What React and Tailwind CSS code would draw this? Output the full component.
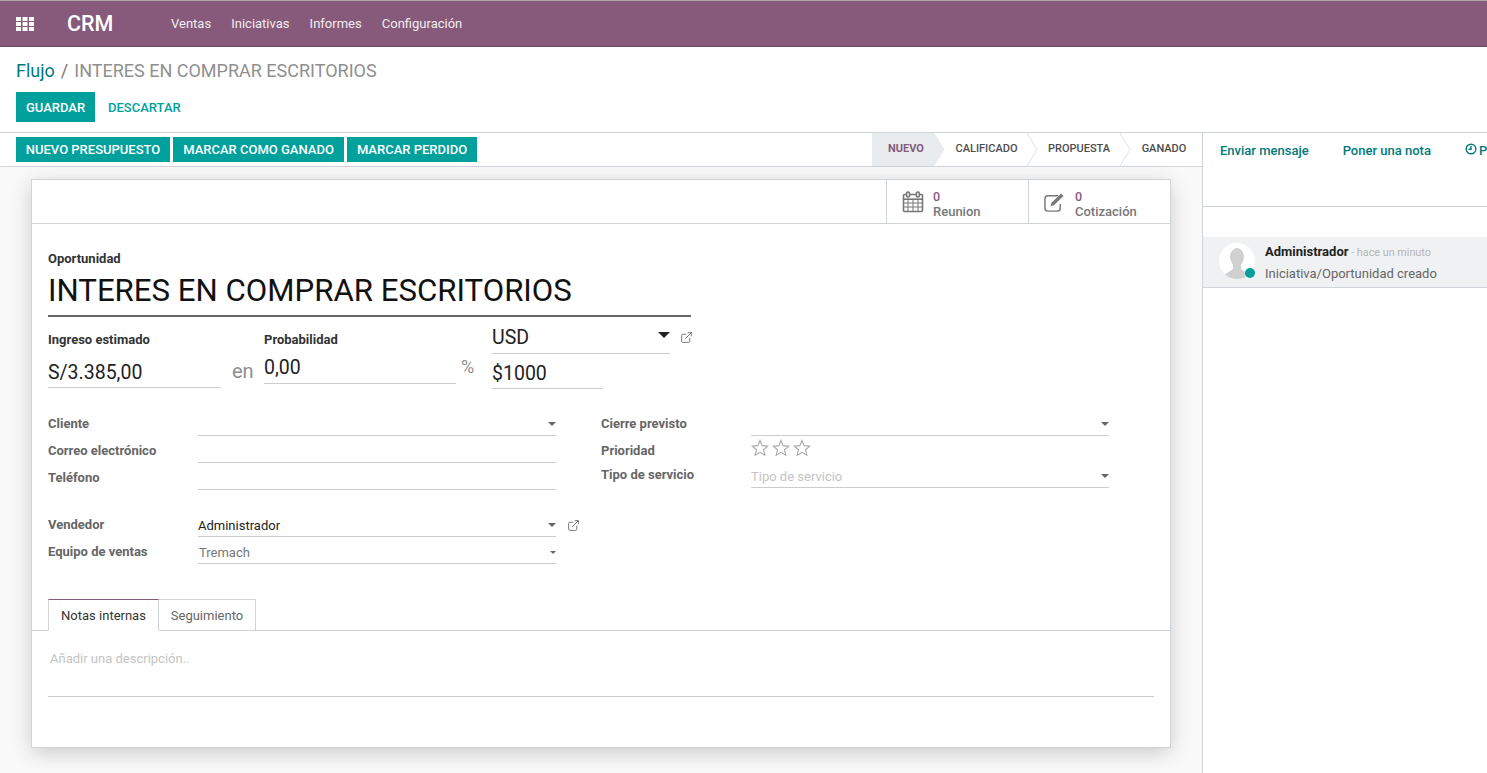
import React from "react";
import { ExternalLink } from "lucide-react";

const Caret = ({ big, small }) => (
  <span className={`inline-block w-0 h-0 border-l-transparent border-r-transparent ${big ? "border-l-[6px] border-r-[6px] border-t-[6px] border-t-[#222]" : small ? "border-l-[3.5px] border-r-[3.5px] border-t-[3.5px] border-t-[#666]" : "border-l-[4.5px] border-r-[4.5px] border-t-[4px] border-t-[#666]"}`} />
);

const Ext = ({ className = "" }) => <ExternalLink size={13} strokeWidth={1.8} className={`text-[#777] ${className}`} />;

const Star = () => (
  <svg width="18" height="17" viewBox="0 0 24 23" fill="none" stroke="#a8a8a8" strokeWidth="1.5" strokeLinejoin="miter">
    <path d="M12 2l3 7 7.5.7-5.7 4.9 1.7 7.3L12 18l-6.5 3.9 1.7-7.3L1.5 9.7 9 9z" />
  </svg>
);

const Field = ({ label, value, caret, muted, placeholder, ext, w = "w-[358px]", small }) => (
  <div className="flex h-[27px] items-center">
    <div className="w-[150px] shrink-0 font-bold text-[#666] leading-none mt-[1px]">{label}</div>
    <div className={`${w} h-[27px] border-b border-[#ccc] flex items-center justify-between relative`}>
      <span className={`pt-[5px] ${placeholder ? "text-[#c4c4c4]" : muted ? "text-[#777] pl-[1px]" : "text-[#222]"}`}>{value || placeholder || ""}</span>
      {caret && <span className="flex items-center pt-[4px]"><Caret small={small} /></span>}
      {ext && <span className="absolute left-[369px] top-[9px]"><Ext /></span>}
    </div>
  </div>
);

const Stat = ({ icon, label }) => (
  <div className="w-[142px] border-l border-[#ced4da] flex items-center pl-[15px] gap-[9px]">
    <div className="w-[22px] flex justify-center mt-[1px]">{icon}</div>
    <div className="leading-[15px] font-medium mt-[4px]">
      <div className="text-[#875A7B] font-medium text-[12.5px]">0</div>
      <div className="text-[#777]">{label}</div>
    </div>
  </div>
);

const Step = ({ children, active, w }) => (
  <div className={`relative h-full flex items-center justify-center ${w} ${active ? "bg-[#e9ecef] text-[#875A7B] font-bold" : "text-[#4c4c4c] font-medium"} text-[11px] uppercase`}>
    {children}
    <svg className="absolute top-0 -right-[11px] z-10" width="11" height="33" viewBox="0 0 11 33" fill={active ? "#e9ecef" : "none"}>
      <path d="M0 0 L10 16.5 L0 33" stroke={active ? "#e9ecef" : "#dde0e4"} />
    </svg>
  </div>
);

const TealBtn = ({ children, w }) => (
  <button className={`h-[25px] ${w} bg-[#00A09D] text-white font-medium text-[13px]`}>{children}</button>
);

export default function App() {
  return (
    <div className="w-[1487px] h-[773px] overflow-hidden flex flex-col bg-white text-[13px] text-[#222] font-['Roboto',sans-serif]">
      <nav className="h-[47px] shrink-0 bg-[#875A7B] border-t border-[#aaa] border-b border-b-[#6d4a64] flex items-center text-white">
        <svg className="ml-[16px]" width="18" height="14" viewBox="0 0 18 14" fill="white">
          {[0, 5, 10].map((y) => [0, 6.5, 13].map((x) => <rect key={`${x}-${y}`} x={x} y={y} width="5" height="4" />))}
        </svg>
        <span className="ml-[33px] text-[21.5px] font-medium w-[104px] pt-[1px]">CRM</span>
        <div className="flex gap-[20.1px] text-[#f1ecf0]">
          <span>Ventas</span><span>Iniciativas</span><span>Informes</span><span>Configuración</span>
        </div>
      </nav>

      <header className="h-[86px] shrink-0 border-b border-[#ced4da] pl-[16px] pt-[12px]">
        <div className="text-[18px] leading-[24px] flex">
          <span className="text-[#00797a]">Flujo</span>
          <span className="text-[#777] mx-[6px]">/</span>
          <span className="text-[#8f8f8f]">INTERES EN COMPRAR ESCRITORIOS</span>
        </div>
        <div className="flex items-center mt-[9px]">
          <button className="h-[30px] w-[79px] bg-[#00A09D] text-white font-medium pt-[1px]">GUARDAR</button>
          <span className="ml-[13px] text-[#00A09D] font-medium pt-[1px]">DESCARTAR</span>
        </div>
      </header>

      <div className="flex-1 flex min-h-0">
        <div className="w-[1202px] shrink-0 flex flex-col">
          <div className="h-[34px] shrink-0 border-b border-[#ced4da] flex items-center justify-between pl-[16px]">
            <div className="flex gap-[3px]">
              <TealBtn w="w-[154px]">NUEVO PRESUPUESTO</TealBtn>
              <TealBtn w="w-[171px]">MARCAR COMO GANADO</TealBtn>
              <TealBtn w="w-[130px]">MARCAR PERDIDO</TealBtn>
            </div>
            <div className="flex h-[33px] items-stretch">
              <Step active w="w-[62px] pl-[6px]">Nuevo</Step>
              <Step w="w-[93px] pl-[12px]">Calificado</Step>
              <Step w="w-[93px] pl-[11px]">Propuesta</Step>
              <div className="w-[82px] pl-[6px] flex items-center justify-center text-[11px] font-medium text-[#4c4c4c] uppercase">Ganado</div>
            </div>
          </div>

          <div className="flex-1 bg-[#f9f9f9] pl-[31px] pt-[12px] min-h-0">
            <div className="w-[1140px] h-[569px] bg-white border border-[#ced4da] shadow-[0_5px_20px_-1px_rgba(0,0,0,0.2)]">
              <div className="h-[44px] border-b border-[#ced4da] flex justify-end">
                <Stat label="Reunion" icon={
                  <svg width="22" height="22" viewBox="0 0 22 22" fill="none" stroke="#777" strokeWidth="1.6">
                    <rect x="1.5" y="3.5" width="19" height="17" rx="1" />
                    <path d="M1.5 8.2h19" strokeWidth="1.6" />
                    <path d="M1.5 12h19M1.5 16h19M6 8v12.5M11 8v12.5M16 8v12.5" strokeWidth="1" />
                    <rect x="4.6" y="1" width="3" height="5" rx="1.4" fill="#fff" />
                    <rect x="14.4" y="1" width="3" height="5" rx="1.4" fill="#fff" />
                  </svg>
                } />
                <Stat label="Cotización" icon={
                  <svg width="23" height="21" viewBox="0 0 23 21" fill="none" stroke="#777" strokeWidth="1.5">
                    <path d="M15 3.5H4A3 3 0 0 0 1 6.5v10a3 3 0 0 0 3 3h10a3 3 0 0 0 3-3V12" />
                    <path d="M6.5 14.5l.8-3.5L17.8.9l2.9 2.7L10.2 13.8z" fill="#777" stroke="#fff" strokeWidth="0.6" />
                  </svg>
                } />
              </div>

              <div className="px-[16px] pt-[27px]">
                <div className="font-bold text-[13px] leading-[15px] text-[#333]">Oportunidad</div>
                <div className="w-[643px] h-[51px] border-b-2 border-[#666] text-[31.2px] leading-[48px] text-[#111] whitespace-nowrap pt-[1px]">
                  INTERES EN COMPRAR ESCRITORIOS
                </div>

                <div className="flex h-[80px]">
                  <div className="w-[173px] pt-[15px]">
                    <div className="font-bold text-[13px] leading-[16px] text-[#333]">Ingreso estimado</div>
                    <div className="mt-[9px] h-[31px] border-b border-[#ccc] text-[19.5px] leading-[30px] pt-[1px]">S/3.385,00</div>
                  </div>
                  <div className="w-[43px] pl-[11px] pt-[41px] text-[20px] leading-[27px] text-[#8f8f8f]">en</div>
                  <div className="w-[192px] pt-[15px]">
                    <div className="font-bold text-[13px] leading-[16px] text-[#333]">Probabilidad</div>
                    <div className="mt-[4px] h-[32px] border-b border-[#ccc] text-[19.5px] leading-[30px] pt-[1px]">0,00</div>
                  </div>
                  <div className="w-[36px] pl-[5px] pt-[36px] text-[18px] leading-[27px] text-[#8f8f8f]">%</div>
                  <div className="w-[201px] relative pt-[4px]">
                    <div className="w-[178px] h-[33px] border-b border-[#ccc] flex items-center justify-between text-[19.5px] leading-[30px]">
                      <span className="pt-[1px]">USD</span><span className="mb-[5px] flex"><Caret big /></span>
                    </div>
                    <span className="absolute left-[188px] top-[14px]"><Ext /></span>
                    <div className="mt-[4px] w-[111px] h-[31px] border-b border-[#ccc] text-[19.5px] leading-[30px] pt-[1px]">$1000</div>
                  </div>
                </div>

                <div className="flex mt-[12px]">
                  <div className="w-[553px]">
                    <Field label="Cliente" caret />
                    <Field label="Correo electrónico" />
                    <Field label="Teléfono" />
                    <div className="h-[20px]" />
                    <Field label="Vendedor" value="Administrador" caret ext />
                    <Field label="Equipo de ventas" value="Tremach" muted caret small />
                  </div>
                  <div>
                    <Field label="Cierre previsto" caret />
                    <div className="flex h-[26px] items-center">
                      <div className="w-[150px] font-bold text-[#666] leading-none mt-[2px]">Prioridad</div>
                      <div className="flex gap-[3px] -mt-[3px]"><Star /><Star /><Star /></div>
                    </div>
                    <div className="flex h-[26px] items-center">
                      <div className="w-[150px] font-bold text-[#666] leading-none -mt-[1px]">Tipo de servicio</div>
                      <div className="w-[358px] h-[26px] border-b border-[#ccc] flex items-center justify-between">
                        <span className="text-[#c4c4c4] pt-[4px]">Tipo de servicio</span><span className="flex pt-[3px]"><Caret /></span>
                      </div>
                    </div>
                  </div>
                </div>

                <div className="-mx-[16px] mt-[35px] h-[32px] border-b border-[#ced4da] flex pl-[16px]">
                  <div className="h-[32px] w-[111px] bg-white border border-[#ced4da] border-b-white border-t-[#875A7B] flex items-center justify-center text-[#333] pt-[1px]">Notas internas</div>
                  <div className="h-[32px] w-[97px] border border-l-0 border-[#ced4da] flex items-center justify-center text-[#666] pt-[1px]">Seguimiento</div>
                </div>
                <div className="h-[66px] border-b border-[#ccc] pt-[19px] pl-[2px] text-[#c4c4c4] leading-[18px]">Añadir una descripción..</div>
              </div>
            </div>
          </div>
        </div>

        <aside className="flex-1 border-l border-[#ced4da] min-w-0 overflow-hidden">
          <div className="h-[74px] border-b border-[#ced4da] flex pl-[17px] pt-[8px] gap-[34px] font-medium text-[#00797a] whitespace-nowrap">
            <span>Enviar mensaje</span>
            <span>Poner una nota</span>
            <span className="flex items-start gap-[2px]">
              <svg className="mt-[2px]" width="12" height="12" viewBox="0 0 12 12" fill="none" stroke="#00797a" strokeWidth="1.4">
                <circle cx="6" cy="6" r="4.8" /><path d="M6 3v3.2H3.6" />
              </svg>
              Planificar actividad
            </span>
          </div>
          <div className="mt-[30px] h-[51px] bg-[#f0f1f3] border-b border-[#ced4da] flex pl-[16px] relative">
            <div className="w-[36px] h-[36px] mt-[6px] rounded-full bg-white overflow-hidden relative shrink-0">
              <svg width="36" height="36" viewBox="0 0 36 36" fill="#d0d0d0">
                <ellipse cx="18" cy="14" rx="7" ry="9" />
                <path d="M14 20h8v6l9 6v4H5v-4l9-6z" />
              </svg>
            </div>
            <span className="absolute left-[42px] top-[31px] w-[10px] h-[10px] rounded-full bg-[#00A09D]" />
            <div className="ml-[10px] pt-[7px]">
              <div className="leading-[16px]"><span className="font-bold text-[#222]">Administrador</span><span className="text-[10.8px] text-[#b5b5b5]"> - hace un minuto</span></div>
              <div className="mt-[5px] leading-[16px] text-[#666]">Iniciativa/Oportunidad creado</div>
            </div>
          </div>
        </aside>
      </div>
    </div>
  );
}
